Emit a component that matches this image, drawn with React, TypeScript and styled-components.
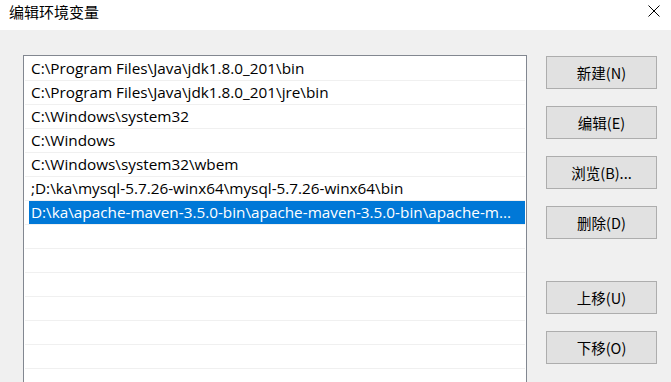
import React from "react";
import styled, { createGlobalStyle } from "styled-components";

const Global = createGlobalStyle`
  html, body { margin: 0; padding: 0; }
  body {
    width: 671px;
    height: 382px;
    overflow: hidden;
    background: #f0f0f0;
    font-family: "Noto Sans CJK SC", "Noto Sans", sans-serif;
    color: #000;
  }
`;

const Window = styled.div`
  width: 671px;
  height: 382px;
  display: flex;
  flex-direction: column;
  overflow: hidden;
`;

const TitleBar = styled.div`
  height: 30px;
  flex: none;
  background: #fff;
  display: flex;
  align-items: center;
  justify-content: space-between;
  padding: 0 11px 0 9px;
`;

const Title = styled.div`
  font-size: 15px;
  line-height: 15px;
  margin-top: -7px;
`;

const CloseIcon = styled.svg`
  width: 12px;
  height: 12px;
  margin-top: -8px;
`;

const Body = styled.div`
  flex: 1;
  display: flex;
  align-items: flex-start;
  padding: 25px 0 0 23px;
  gap: 19px;
`;

const List = styled.div`
  width: 500px;
  height: 400px;
  border: 1px solid #828790;
  background: #fff;
  padding: 1px 1px 0 1px;
  display: flex;
  flex-direction: column;
`;

const Row = styled.div`
  height: 24px;
  flex: none;
  box-sizing: border-box;
  border-bottom: 1px solid #f0f0f0;
  display: flex;
  align-items: stretch;
`;

const RowInner = styled.div<{ $selected?: boolean }>`
  flex: 1;
  margin-left: ${(p) => (p.$selected ? "4px" : "0")};
  padding-left: ${(p) => (p.$selected ? "2px" : "6px")};
  background: ${(p) => (p.$selected ? "#0078d7" : "transparent")};
  color: ${(p) => (p.$selected ? "#fff" : "#000")};
  font-family: "Open Sans", "Noto Sans", sans-serif;
  font-size: 15.3px;
  line-height: 23px;
  white-space: nowrap;
  overflow: hidden;
`;

const Buttons = styled.div`
  display: flex;
  flex-direction: column;
  padding-top: 1px;
`;

const Button = styled.div<{ $gap: number }>`
  width: 111px;
  height: 33px;
  box-sizing: border-box;
  margin-bottom: ${(p) => p.$gap}px;
  background: #e1e1e1;
  border: 1px solid #adadad;
  display: flex;
  align-items: center;
  justify-content: center;
  font-size: 14.5px;
  font-family: "Noto Sans CJK SC", sans-serif;
`;

const items = [
  "C:\\Program Files\\Java\\jdk1.8.0_201\\bin",
  "C:\\Program Files\\Java\\jdk1.8.0_201\\jre\\bin",
  "C:\\Windows\\system32",
  "C:\\Windows",
  "C:\\Windows\\system32\\wbem",
  ";D:\\ka\\mysql-5.7.26-winx64\\mysql-5.7.26-winx64\\bin",
  "D:\\ka\\apache-maven-3.5.0-bin\\apache-maven-3.5.0-bin\\apache-m...",
  "",
  "",
  "",
  "",
  "",
  "",
  "",
];

const buttons: [string, number][] = [
  ["新建(N)", 17],
  ["编辑(E)", 17],
  ["浏览(B)...", 17],
  ["删除(D)", 42],
  ["上移(U)", 17],
  ["下移(O)", 17],
];

export default function App() {
  return (
    <Window>
      <Global />
      <TitleBar>
        <Title>编辑环境变量</Title>
        <CloseIcon viewBox="0 0 12 12">
          <path d="M0.5 0.5 L11.5 11.5 M11.5 0.5 L0.5 11.5" stroke="#000" strokeWidth="1" fill="none" />
        </CloseIcon>
      </TitleBar>
      <Body>
        <List>
          {items.map((t, i) => (
            <Row key={i}>
              <RowInner $selected={i === 6}>{t}</RowInner>
            </Row>
          ))}
        </List>
        <Buttons>
          {buttons.map(([label, gap]) => (
            <Button key={label} $gap={gap}>
              {label}
            </Button>
          ))}
        </Buttons>
      </Body>
    </Window>
  );
}
